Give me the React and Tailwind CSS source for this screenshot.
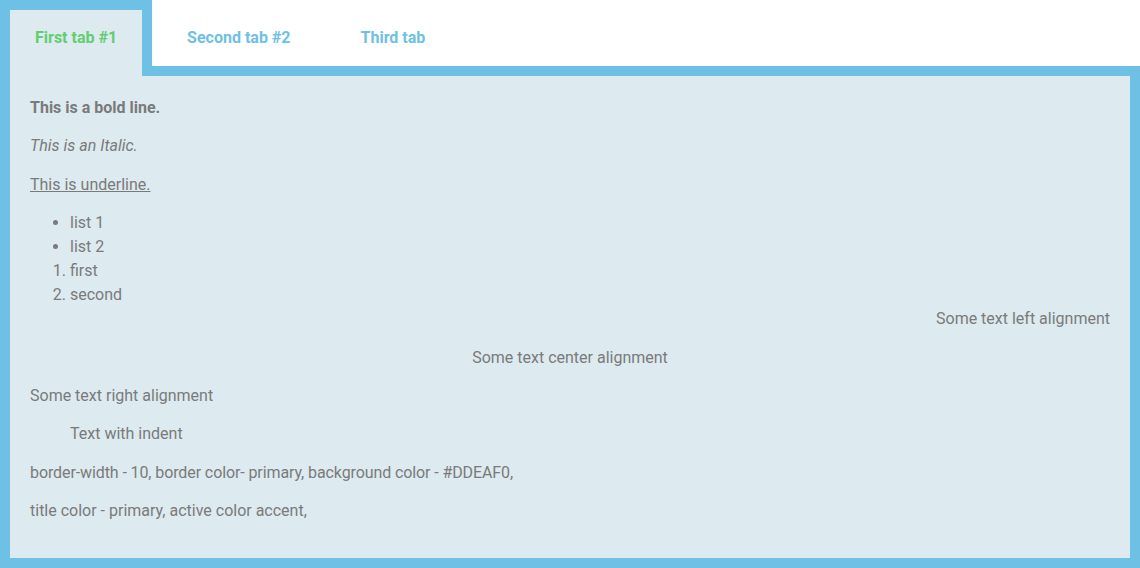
const tabs = ['First tab #1', 'Second tab #2', 'Third tab'];

export default function App() {
  const active = 0;
  return (
    <div className="w-[1140px] h-[568px] bg-white font-['Roboto',sans-serif] text-[#7A7A7A]">
      <div className="flex h-[66px] relative z-10">
        {tabs.map((t, i) =>
          i === active ? (
            <div
              key={t}
              className="h-[76px] border-t-[10px] border-x-[10px] border-[#6EC1E4] bg-[#DDEAF0] px-[25px] pt-5 text-base leading-4 font-bold text-[#61CE70]"
            >
              {t}
            </div>
          ) : (
            <div
              key={t}
              className="h-[66px] border-t-[10px] border-x-[10px] border-transparent px-[25px] pt-5 text-base leading-4 font-bold text-[#6EC1E4]"
            >
              {t}
            </div>
          )
        )}
      </div>
      <div className="h-[502px] border-[10px] border-[#6EC1E4] bg-[#DDEAF0] p-5 text-base leading-6">
        <p className="mb-[14.4px] font-bold">This is a bold line.</p>
        <p className="mb-[14.4px] italic">This is an Italic.</p>
        <p className="mb-[14.4px] underline">This is underline.</p>
        <ul className="list-disc pl-10">
          <li>list 1</li>
          <li>list 2</li>
        </ul>
        <ol className="list-decimal pl-10">
          <li>first</li>
          <li>second</li>
        </ol>
        <p className="mb-[14.4px] text-right">Some text left alignment</p>
        <p className="mb-[14.4px] text-center">Some text center alignment</p>
        <p className="mb-[14.4px]">Some text right alignment</p>
        <p className="mb-[14.4px] pl-10">Text with indent</p>
        <p className="mb-[14.4px] tracking-[-0.1px]">border-width - 10, border color- primary, background color - #DDEAF0,</p>
        <p className="mb-[14.4px]">title color - primary, active color accent,</p>
      </div>
    </div>
  );
}
